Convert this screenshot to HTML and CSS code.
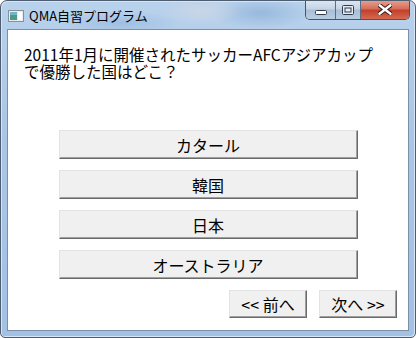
FILE: index.html
```html
<!doctype html>
<html lang="ja">
<head>
  <meta charset="utf-8">
  <title>QMA自習プログラム</title>
  <link rel="stylesheet" href="styles.css">
</head>
<body>
  <div class="window">
    <div class="titlebar">
      <div class="app">
        <svg class="app-icon" width="16" height="12" viewBox="0 0 16 12">
          <rect x="0.5" y="0.5" width="15" height="11" fill="#e8ecef" stroke="#8a9096"/>
          <rect x="2" y="2" width="7" height="8" fill="#4d9a8c"/>
          <rect x="2" y="2" width="7" height="3" fill="#6fb7c9"/>
          <rect x="10" y="2" width="4" height="8" fill="#ffffff"/>
        </svg>
        <span class="app-title">QMA自習プログラム</span>
      </div>
      <div class="caption-btns">
        <div class="cap cap-min">
          <svg width="12" height="6" viewBox="0 0 12 6"><rect x="0.5" y="0.5" width="11" height="4" rx="1" fill="#fff" stroke="#2f3b4c"/></svg>
        </div>
        <div class="cap cap-max">
          <svg width="12" height="10" viewBox="0 0 12 10"><rect x="0.5" y="0.5" width="11" height="9" rx="1" fill="#e6edf5" stroke="#2f3b4c"/><rect x="3" y="3" width="6" height="4" fill="none" stroke="#2f3b4c"/></svg>
        </div>
        <div class="cap cap-close">
          <svg width="14" height="11" viewBox="0 0 14 11"><path d="M1 1 L13 10 M13 1 L1 10" stroke="#3a1a14" stroke-width="4.4" stroke-linecap="round"/><path d="M1.5 1.3 L12.5 9.7 M12.5 1.3 L1.5 9.7" stroke="#fff" stroke-width="2.4" stroke-linecap="round"/></svg>
        </div>
      </div>
    </div>
    <div class="client">
      <p class="question">2011年1月に開催されたサッカーAFCアジアカップ<br>で優勝した国はどこ？</p>
      <div class="choices">
        <button class="btn choice">カタール</button>
        <button class="btn choice">韓国</button>
        <button class="btn choice">日本</button>
        <button class="btn choice">オーストラリア</button>
      </div>
      <div class="nav">
        <button class="btn nav-btn">&lt;&lt; 前へ</button>
        <button class="btn nav-btn">次へ &gt;&gt;</button>
      </div>
    </div>
  </div>
</body>
</html>
```

FILE: styles.css
```css
html, body {
  margin: 0;
  padding: 0;
  background: #fff;
}
body {
  font-family: "Noto Sans CJK JP", "Noto Sans", sans-serif;
}
.window {
  width: 416px;
  height: 338px;
  box-sizing: border-box;
  border: 1px solid #4f5d70;
  border-radius: 7px 7px 5px 5px;
  display: flex;
  flex-direction: column;
  background:
    radial-gradient(ellipse 40px 14px at 200px 10px, #c9d6e6 0%, rgba(201,214,230,0) 100%),
    radial-gradient(ellipse 60px 12px at 120px 22px, #9fbfe2 0%, rgba(159,191,226,0) 100%),
    radial-gradient(ellipse 50px 16px at 260px 12px, #98b9dd 0%, rgba(152,185,221,0) 100%),
    linear-gradient(to bottom, #b9d2ec 0%, #a9c6e6 40%, #a3c1e3 100%);
  box-shadow: inset 1px 1px 0 #d6e4f3, inset -1px -1px 0 #d6e4f3;
  overflow: hidden;
}
.titlebar {
  height: 28px;
  display: flex;
  justify-content: space-between;
  align-items: flex-start;
  padding-left: 7px;
}
.app {
  display: flex;
  align-items: center;
  height: 28px;
}
.app-icon {
  display: block;
  margin-top: 2px;
}
.app-title {
  margin-left: 5px;
  font-size: 13px;
  color: #000;
  margin-top: 1px;
}
.caption-btns {
  display: flex;
  margin-top: -1px;
  margin-right: 5px;
  height: 19px;
  border: 1px solid #46546a;
  border-top: none;
  border-radius: 0 0 5px 5px;
  overflow: hidden;
}
.cap {
  display: flex;
  align-items: center;
  justify-content: center;
  height: 19px;
}
.cap-min {
  width: 29px;
  background: linear-gradient(to bottom, #dfe8f2 0%, #c5d5e6 45%, #aabfd6 55%, #b8cde2 100%);
  border-right: 1px solid #5c6c82;
}
.cap-min svg {
  margin-top: 6px;
}
.cap-max {
  width: 24px;
  background: linear-gradient(to bottom, #dfe8f2 0%, #c5d5e6 45%, #aabfd6 55%, #b8cde2 100%);
  border-right: 1px solid #5c6c82;
}
.cap-close {
  width: 48px;
  background: linear-gradient(to bottom, #e8a493 0%, #d56f5b 45%, #c2412c 55%, #d6694e 100%);
}
.client {
  flex: 1;
  margin: 0 6px 6px 6px;
  background: #fff;
  border: 1px solid #7c8fa8;
  display: flex;
  flex-direction: column;
}
.question {
  margin: 16px 0 0 16px;
  font-size: 15.5px;
  line-height: 17px;
  color: #000;
}
.choices {
  margin-top: 50px;
  display: flex;
  flex-direction: column;
  align-items: center;
  gap: 11px;
}
.btn {
  font-family: "Noto Sans CJK JP", "Noto Sans", sans-serif;
  font-size: 16px;
  line-height: 1;
  color: #000;
  background: #f0f0f0;
  border: 1px solid;
  border-color: #e3e3e3 #6a6a6a #6a6a6a #e3e3e3;
  box-shadow: inset -1px -1px 0 #a0a0a0;
  padding: 0;
  margin: 0;
  box-sizing: border-box;
}
.choice {
  width: 299px;
  height: 29px;
}
.nav {
  margin-top: 11px;
  display: flex;
  justify-content: flex-end;
  gap: 12px;
  padding-right: 11px;
}
.nav-btn {
  width: 78px;
  height: 28px;
}
```
